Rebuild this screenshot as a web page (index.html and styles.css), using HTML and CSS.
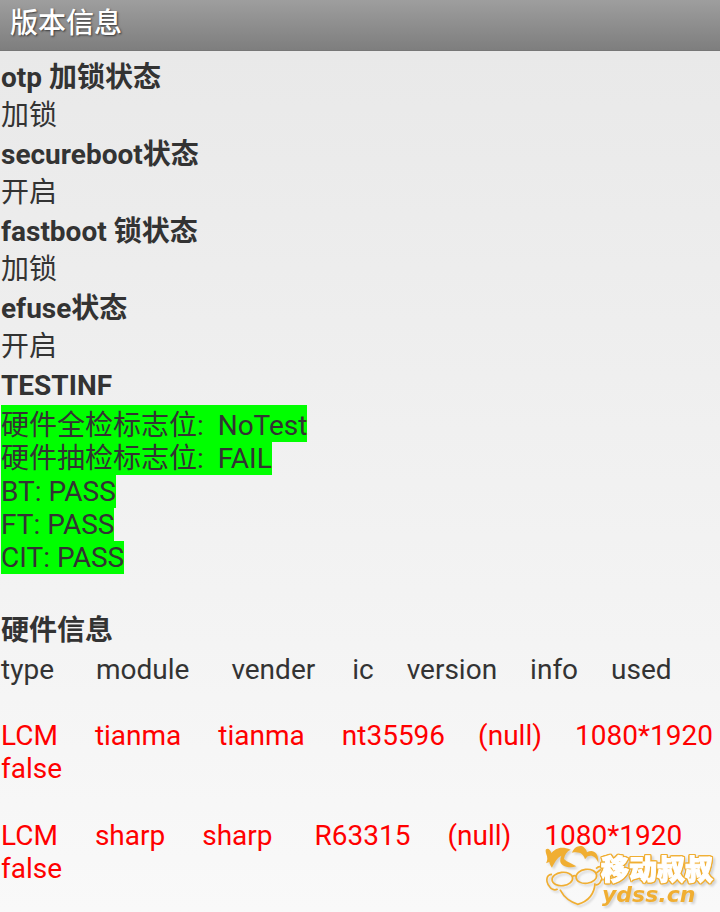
FILE: index.html
```html
<!DOCTYPE html>
<html lang="zh-CN">

<head>
    <meta charset="UTF-8">
    <meta name="viewport" content="width=device-width, initial-scale=1.0">
    <title>版本信息</title>
    <link rel="stylesheet" href="styles.css">
</head>

<body>
    <header class="title-bar">
        <h1>版本信息</h1>
    </header>

    <main class="content">
        <section>
            <h2>otp 加锁状态</h2>
            <p class="value">加锁</p>
            <h2>secureboot状态</h2>
            <p class="value">开启</p>
            <h2>fastboot 锁状态</h2>
            <p class="value">加锁</p>
            <h2>efuse状态</h2>
            <p class="value">开启</p>
        </section>

        <section class="test-info">
            <h2>TESTINF</h2>
            <p class="flag first">硬件全检标志位:&nbsp; NoTest</p>
            <p class="flag">硬件抽检标志位:&nbsp; FAIL</p>
            <p class="flag">BT: PASS</p>
            <p class="flag">FT: PASS</p>
            <p class="flag">CIT: PASS</p>
        </section>

        <section>
            <h2>硬件信息</h2>
            <div class="row labels">
                <span class="wide">type</span>
                <span class="wide">module</span>
                <span>vender</span>
                <span class="narrow">ic</span>
                <span class="narrow">version</span>
                <span class="narrow">info</span>
                <span class="last">used</span>
            </div>
            <div class="row device">
                <span>LCM</span>
                <span>tianma</span>
                <span>tianma</span>
                <span class="narrow">nt35596</span>
                <span class="narrow">(null)</span>
                <span class="last">1080*1920</span>
                <span>false</span>
            </div>
            <div class="row device">
                <span>LCM</span>
                <span>sharp</span>
                <span class="wide">sharp</span>
                <span>R63315</span>
                <span class="narrow">(null)</span>
                <span class="last">1080*1920</span>
                <span>false</span>
            </div>
        </section>
    </main>

    <svg class="watermark" viewBox="0 0 180 72" role="img" aria-label="移动叔叔 ydss.cn">
        <g transform="scale(0.3333)">
            <path class="hair" d="M18 28 C24 23 31 28 34 39 C45 27 62 16 92 29 C80 34 74 44 72 57 C82 67 96 70 109 79 C90 86 66 80 61 66 C60 60 61 54 64 47 C51 53 43 70 36 83 C31 77 29 72 28 66 L18 70 C24 58 22 50 19 43 C17 37 16 32 18 28Z" />
            <path class="hair" d="M96 38 C102 22 120 12 133 23 C138 28 140 32 141 37 C157 26 177 36 175 68 C168 51 156 44 143 49 L135 58 C131 42 119 33 96 38Z" />
            <ellipse class="line" cx="67" cy="117" rx="31" ry="20" transform="rotate(-7 67 117)" />
            <ellipse class="line" cx="139" cy="109" rx="31" ry="21" transform="rotate(-7 139 109)" />
            <path class="line" d="M97 110 Q103 104 109 109 M169 99 L183 88" />
            <path class="line" d="M36 103 C20 103 15 122 28 139 C34 149 44 152 53 147" />
            <path class="line" d="M168 86 C182 73 191 83 188 105 C185 126 177 137 166 134" />
            <path class="line" d="M60 149 C74 176 92 185 113 193 C144 184 163 164 165 130" />
        </g>
        <text class="name" x="61" y="40">移动叔叔</text>
        <text class="site" x="62" y="62">ydss.cn</text>
    </svg>
</body>

</html>
```
FILE: styles.css
```css
body {
    position: relative;
    min-height: 100vh;
    margin: 0;
    font-family: Roboto, "Noto Sans CJK SC", sans-serif;
    font-size: 28px;
    color: #333;
    background: linear-gradient(#e8e8e8, #f9f9f9);
}

h1,
h2,
p {
    margin: 0;
    font-size: 28px;
}

.title-bar {
    height: 50px;
    padding-left: 10px;
    border-bottom: 1px solid #777;
    background: linear-gradient(#9e9e9e, #7e7e7e);
}

h1 {
    font-weight: 500;
    line-height: 48px;
    color: #fff;
    text-shadow: 1px 1px 2px rgba(0, 0, 0, 0.6);
}

.content {
    padding: 7px 1px 24px;
}

h2 {
    font-weight: bold;
    line-height: 39px;
}

.value {
    line-height: 38px;
}

.test-info {
    margin-bottom: 37px;
}

.flag {
    width: fit-content;
    line-height: 33px;
    background: #0f0;
}

.flag.first {
    padding-top: 4px;
}

.row {
    display: flex;
    flex-wrap: wrap;
    line-height: 33px;
}

.row span {
    margin-right: 37px;
}

.row .wide {
    margin-right: 42px;
}

.row .narrow {
    margin-right: 33px;
}

.row .last {
    margin-right: 0;
}

.row.labels {
    margin-bottom: 30px;
    line-height: 39px;
}

.device {
    margin-bottom: 34px;
    color: #f00;
}

.device:last-child {
    margin-bottom: 0;
}

/* logo over the lower right corner */
.watermark {
    position: absolute;
    right: 0;
    bottom: 0;
    width: 180px;
    height: 72px;
    filter: drop-shadow(2px 2px 1px rgba(0, 0, 0, 0.15));
}

.hair,
.site {
    fill: #f0ae32;
}

.line {
    fill: none;
    stroke: #f0ae32;
    stroke-width: 5;
}

/* thick white letters with a thin gold rim */
.name {
    font-family: "Noto Sans CJK SC", sans-serif;
    font-size: 28px;
    font-weight: 900;
    fill: #fff;
    stroke: #fff;
    stroke-width: 1;
    filter: drop-shadow(1px 0 0 #f0ae32) drop-shadow(-1px 0 0 #f0ae32) drop-shadow(0 1px 0 #f0ae32) drop-shadow(0 -1px 0 #f0ae32);
}

.site {
    font-family: "DejaVu Sans", sans-serif;
    font-size: 22px;
    font-style: italic;
    font-weight: bold;
}
```
